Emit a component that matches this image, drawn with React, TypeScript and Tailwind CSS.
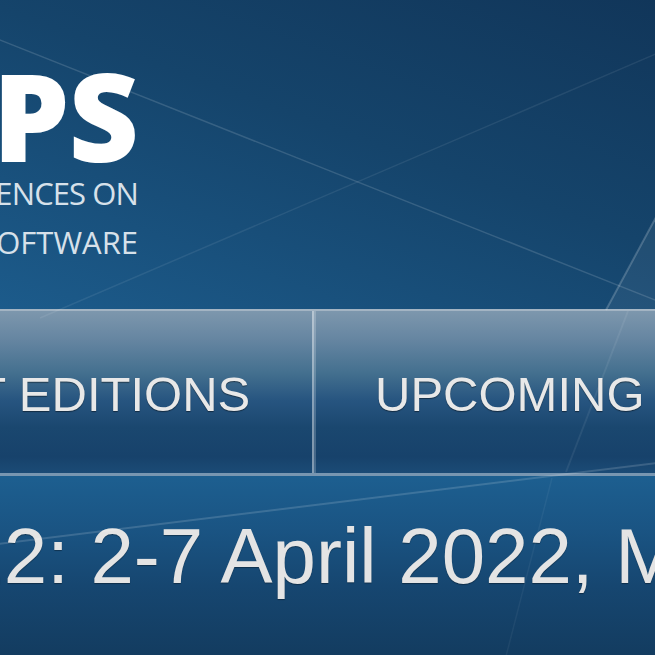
import React from 'react';

const Backdrop: React.FC = () => (
  <svg className="absolute inset-0 w-full h-full pointer-events-none" viewBox="0 0 655 655" fill="none">
    <polygon points="668,195 606,310 668,310" fill="#ffffff" fillOpacity="0.06" />
    <line x1="-10" y1="36" x2="665" y2="304" stroke="#ffffff" strokeOpacity="0.14" strokeWidth="1.5" />
    <line x1="40" y1="318" x2="665" y2="50" stroke="#ffffff" strokeOpacity="0.08" strokeWidth="1.5" />
    <line x1="668" y1="195" x2="606" y2="310" stroke="#ffffff" strokeOpacity="0.2" strokeWidth="2" />
    <line x1="628" y1="311" x2="566" y2="472" stroke="#ffffff" strokeOpacity="0.07" strokeWidth="2" />
    <line x1="552" y1="478" x2="505" y2="660" stroke="#ffffff" strokeOpacity="0.05" strokeWidth="1.5" />
    <line x1="-10" y1="545" x2="665" y2="462" stroke="#ffffff" strokeOpacity="0.15" strokeWidth="2" />
  </svg>
);

const App: React.FC = () => {
  return (
    <div className="relative w-[655px] h-[655px] overflow-hidden bg-[#173f63] font-['Liberation_Sans',Arial,sans-serif]">
      <header className="h-[309px] pt-[61px] bg-[linear-gradient(200deg,#11365a_0%,#15446b_45%,#1c5b8b_100%)]">
        <div className="w-[600px] -ml-[462px] text-right font-['Open_Sans',sans-serif]">
          <div className="text-[122px] leading-[108px] font-extrabold text-white tracking-[-1px]">ETAPS</div>
          <div className="text-[31px] leading-[49px] font-medium text-[#d7e1ea] tracking-[-0.9px]">EUROPEAN JOINT CONFERENCES ON</div>
          <div className="text-[31px] leading-[49px] font-medium text-[#d7e1ea] tracking-[0px]">THEORY AND PRACTICE OF SOFTWARE</div>
        </div>
      </header>

      <nav className="flex h-[167px] border-t-2 border-[#a3b4c3] border-b-[3px] border-b-[#7896b1] bg-[linear-gradient(to_bottom,#7d97ad_0%,#6585a1_18%,#44708f_38%,#275580_55%,#1a476f_72%,#17426b_90%,#1b4b76_100%)]">
        <a className="w-[492px] -ml-[180px] shrink-0 flex items-center justify-center pt-[6px] text-[49px] text-[#e8e8e8] whitespace-nowrap [text-shadow:0_1px_1px_rgba(0,0,0,0.45)]">
          PAST EDITIONS
        </a>
        <div className="flex shrink-0">
          <div className="w-[2px] bg-white/45" />
          <div className="w-[2px] bg-white/20" />
        </div>
        <a className="flex items-center pl-[59px] pt-[6px] text-[49px] text-[#e8e8e8] whitespace-nowrap [text-shadow:0_1px_1px_rgba(0,0,0,0.45)]">
          UPCOMING EVENTS
        </a>
      </nav>

      <section className="h-[179px] pt-[37px] bg-[linear-gradient(to_bottom,#1d5f90_0%,#1a5483_30%,#164670_62%,#133c60_100%)]">
        <h1 className="-ml-[398px] whitespace-nowrap text-[78px] leading-[87px] text-[#e4e4e4] [text-shadow:0_1px_1px_rgba(0,0,0,0.35)]">
          ETAPS 2022: 2-7 April 2022, Munich, Germany
        </h1>
      </section>

      <Backdrop />
    </div>
  );
};

export default App;
